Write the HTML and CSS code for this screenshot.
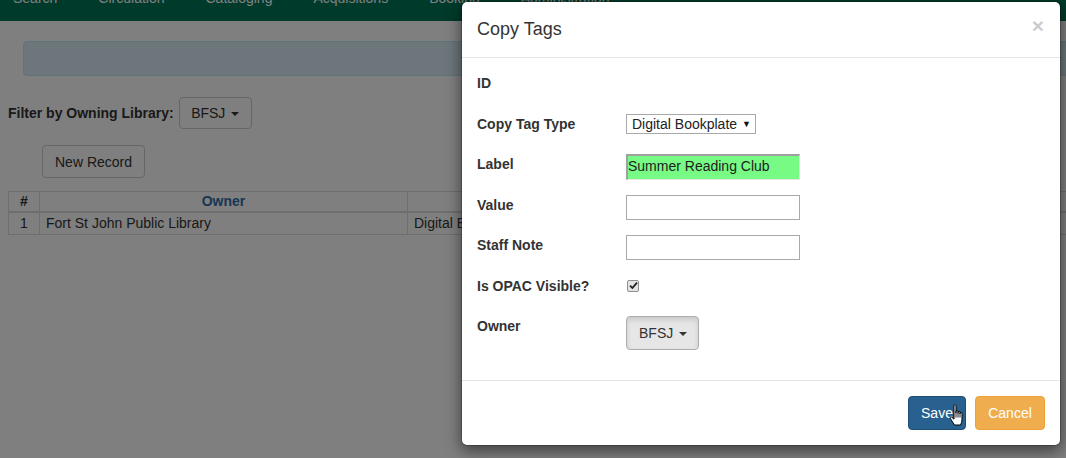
FILE: index.html
```html
<!DOCTYPE html>
<html>
<head>
<meta charset="utf-8">
<link rel="stylesheet" href="styles.css">
</head>
<body>
<nav class="navbar">
  <ul class="nav-list">
    <li>Search</li>
    <li>Circulation</li>
    <li>Cataloging</li>
    <li>Acquisitions</li>
    <li>Booking</li>
    <li>Administration</li>
  </ul>
</nav>
<main class="page">
  <div class="alert"></div>
  <div class="filter">
    <span class="filter-label">Filter by Owning Library:</span>
    <button class="btn btn-default btn-filter">BFSJ <span class="caret"></span></button>
  </div>
  <div class="actions">
    <button class="btn btn-default btn-new">New Record</button>
  </div>
  <table class="grid">
    <thead>
      <tr><th class="c-num">#</th><th class="c-owner">Owner</th><th class="c-type"></th></tr>
    </thead>
    <tbody>
      <tr><td class="c-num">1</td><td>Fort St John Public Library</td><td>Digital Bookplate</td></tr>
    </tbody>
  </table>
</main>
<div class="backdrop"></div>
<div class="modal">
  <div class="modal-header">
    <h4 class="modal-title">Copy Tags</h4>
    <span class="close">&times;</span>
  </div>
  <div class="modal-body">
    <div class="form-row"><label>ID</label><div class="ctl"></div></div>
    <div class="form-row"><label>Copy Tag Type</label><div class="ctl"><span class="select">Digital Bookplate <span class="sel-arrow">&#9660;</span></span></div></div>
    <div class="form-row"><label>Label</label><div class="ctl"><span class="input input-filled">Summer Reading Club</span></div></div>
    <div class="form-row"><label>Value</label><div class="ctl"><span class="input"></span></div></div>
    <div class="form-row"><label>Staff Note</label><div class="ctl"><span class="input"></span></div></div>
    <div class="form-row"><label>Is OPAC Visible?</label><div class="ctl"><span class="checkbox"><svg width="9" height="9" viewBox="0 0 9 9"><path d="M1 4.6 L3.4 7 L8 1.6" fill="none" stroke="#222" stroke-width="1.8"/></svg></span></div></div>
    <div class="form-row form-row-last"><label>Owner</label><div class="ctl"><button class="btn btn-owner">BFSJ <span class="caret"></span></button></div></div>
  </div>
  <div class="modal-footer">
    <button class="btn btn-primary">Save</button>
    <button class="btn btn-warning">Cancel</button>
  </div>
</div>
<svg class="cursor" width="18" height="24" viewBox="0 0 18 24">
  <path d="M5 1.5 C5 0.6 7 0.6 7 1.5 L7 9 L7 7.2 C7 6.3 9 6.3 9 7.2 L9 9.5 L9 8 C9 7.1 11 7.1 11 8 L11 10 L11 9 C11 8.1 13 8.1 13 9 L13 15 C13 18 12 19.5 11.5 21 L5.5 21 C4.5 19 2.5 16.5 1.3 14.5 C0.7 13.4 1.8 12.3 2.8 13.2 L5 15.2 Z" fill="#fff" stroke="#000" stroke-width="1" stroke-linejoin="round"/>
  <path d="M7 9 L7 13.5 M9 9.5 L9 13.5 M11 10 L11 13.5" stroke="#000" stroke-width="0.9"/>
</svg>
</body>
</html>
```
FILE: styles.css
```css
* { box-sizing: border-box; }
html, body { margin: 0; padding: 0; }
body {
  font-family: "Liberation Sans", Arial, sans-serif;
  font-size: 14px;
  line-height: 20px;
  color: #333;
  background: #fff;
  width: 1066px;
  height: 458px;
  overflow: hidden;
  position: relative;
}
.navbar {
  height: 21px;
  background: #007454;
  overflow: hidden;
}
.nav-list {
  list-style: none;
  margin: -12px 0 0 13px;
  padding: 0;
  display: flex;
  gap: 41px;
}
.nav-list li { color: #fff; white-space: nowrap; }

.page { padding: 20px 0 0 8px; }
.alert {
  margin-left: 15px;
  margin-right: -10px;
  height: 35px;
  background: #d9edf7;
  border: 1px solid #bce8f1;
  border-radius: 4px;
}
.filter {
  display: flex;
  align-items: center;
  margin-top: 21px;
  height: 32px;
}
.filter-label { font-weight: bold; margin-right: 5px; }
.btn {
  font-family: inherit;
  font-size: 14px;
  line-height: 20px;
  border: 1px solid #ccc;
  border-radius: 4px;
  background: #fff;
  color: #333;
  padding: 6px 12px;
  cursor: pointer;
  white-space: nowrap;
}
.btn-filter { height: 32px; width: 73px; padding: 5px 10px; }
.caret {
  display: inline-block;
  width: 0; height: 0;
  margin-left: 2px;
  vertical-align: middle;
  border-top: 4px solid #333;
  border-left: 4px solid transparent;
  border-right: 4px solid transparent;
}
.actions { margin-top: 16px; padding-left: 34px; }
.btn-new { height: 33px; width: 103px; padding: 6px 10px; }
.grid {
  margin-top: 13px;
  border-collapse: collapse;
  width: 1100px;
  table-layout: fixed;
}
.grid th, .grid td {
  border: 1px solid #ddd;
  padding: 0 6px;
  line-height: 19px;
  text-align: left;
  white-space: nowrap;
}
.grid th { text-align: center; border-bottom: 2px solid #ddd; }
.grid td { height: 22px; }
.grid .c-num { width: 31px; text-align: center; }
.grid .c-owner { width: 368px; color: #2f6da8; }
.grid td.c-num { text-align: center; }

.backdrop {
  position: absolute;
  inset: 0;
  background: rgba(0, 0, 0, 0.5);
}
.modal {
  position: absolute;
  left: 461px;
  top: 1px;
  width: 600px;
  background: #fff;
  border: 1px solid rgba(0, 0, 0, 0.2);
  border-radius: 6px;
  box-shadow: 0 5px 15px rgba(0, 0, 0, 0.5);
  background-clip: padding-box;
}
.modal-header {
  padding: 15px;
  border-bottom: 1px solid #e5e5e5;
  display: flex;
  align-items: center;
  justify-content: space-between;
}
.modal-title {
  margin: 0;
  font-size: 18px;
  font-weight: normal;
  line-height: 25px;
  color: #333;
}
.close {
  font-size: 21px;
  font-weight: bold;
  color: #000;
  opacity: 0.2;
  line-height: 1;
  margin-top: -9px;
  margin-right: 1px;
}
.modal-body {
  padding: 15px 15px 30px;
  display: flex;
  flex-direction: column;
  gap: 15px;
}
.form-row {
  display: flex;
  height: 25.5px;
}
.form-row-last { height: 34px; }
.form-row label {
  width: 149px;
  font-weight: bold;
  line-height: 20px;
}
.ctl { display: flex; align-items: flex-start; }
.select {
  display: inline-flex;
  align-items: center;
  height: 20px;
  width: 130px;
  border: 1px solid #a9a9a9;
  padding: 0 4px 0 5px;
  font-size: 14px;
  color: #222;
  justify-content: space-between;
}
.sel-arrow { font-size: 9px; color: #111; }
.input {
  display: block;
  width: 174px;
  height: 25px;
  border: 1px solid #a9a9a9;
  background: #fff;
}
.input-filled {
  height: 26px;
  background: #77fb85;
  border-style: solid;
  border-width: 2px 1px 1px 2px;
  border-color: #a0a0a0 #e6e6e6 #e6e6e6 #a0a0a0;
  line-height: 21px;
  padding-left: 0;
  color: #1d1d1d;
  white-space: nowrap;
}
.checkbox {
  display: inline-flex;
  align-items: center;
  justify-content: center;
  width: 12px;
  height: 12px;
  margin-top: 4px;
  margin-left: 1px;
  border: 1px solid #8f8f8f;
  border-radius: 2px;
  background: #e4e4e4;
}
.btn-owner {
  height: 34px;
  width: 73px;
  background: #e6e6e6;
  border-color: #adadad;
  box-shadow: inset 0 3px 5px rgba(0, 0, 0, 0.125);
}
.modal-footer {
  padding: 15px;
  border-top: 1px solid #e5e5e5;
  display: flex;
  justify-content: flex-end;
  gap: 9px;
}
.btn-primary {
  background: #286090;
  border-color: #204d74;
  color: #fff;
  height: 34px;
  width: 58px;
}
.btn-warning {
  background: #f0ad4e;
  border-color: #eea236;
  color: #fff;
  height: 34px;
  width: 70px;
}
.cursor {
  position: absolute;
  left: 949px;
  top: 404px;
}
```
